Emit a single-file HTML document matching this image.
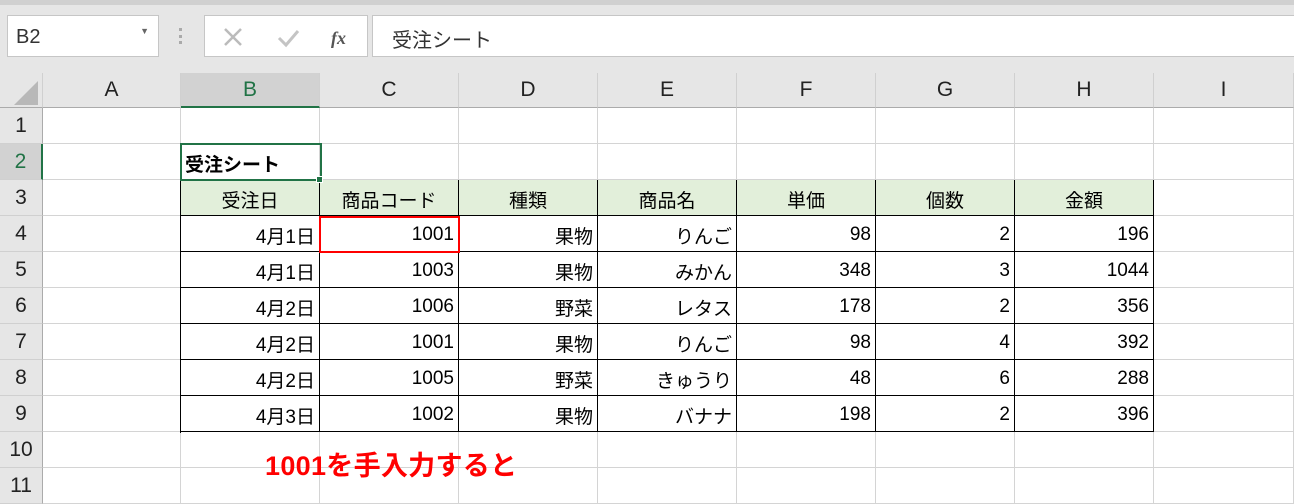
<!DOCTYPE html>
<html><head><meta charset="utf-8"><style>
*{margin:0;padding:0;box-sizing:border-box}
body{width:1294px;height:504px;overflow:hidden;background:#e6e6e6;font-family:"Liberation Sans","Noto Sans CJK JP",sans-serif;position:relative}
.top{position:absolute;left:0;top:0;width:1294px;height:5px;background:#d0d0d0}
.box{position:absolute;background:#fff;border:1px solid #c6c6c6}
.grid{position:absolute;left:0;top:73px;display:grid;grid-template-columns:43px 138px repeat(7,139px) 140px;grid-template-rows:35px repeat(11,36px);background:#fff}
.grid div{border-right:1px solid #d4d4d4;border-bottom:1px solid #d4d4d4;font-size:19px;color:#000;display:flex;align-items:center;justify-content:flex-end;padding-right:4px;padding-top:3px;white-space:nowrap}
.grid .ch{background:#e6e6e6;justify-content:center;padding:0;color:#222;font-size:21px;border-bottom:1px solid #ababab;border-right:1px solid #d0d0d0}
.grid .rh{background:#e6e6e6;justify-content:center;padding:0;color:#222;font-size:21px;border-right:1px solid #ababab;border-bottom:1px solid #d0d0d0}
.grid .t{border-right:1px solid #000;border-bottom:1px solid #000}
.grid .h{background:#e2efda;justify-content:center;padding-right:0}
</style></head><body>
<div class="top"></div>
<div class="box" style="left:7px;top:15px;width:152px;height:42px;font-size:20px;color:#333;padding:10px 0 0 8px">B2<span style="position:absolute;right:9px;top:10px;font-size:9px;color:#666">▼</span></div>
<div style="position:absolute;left:179px;top:28px;width:3px;height:16px;border-left:3px dotted #aaa"></div>
<div class="box" style="left:204px;top:15px;width:164px;height:42px">
<svg width="164" height="42" style="position:absolute;left:0;top:0"><path d="M20 13 L36 29 M36 13 L20 29" stroke="#bbb" stroke-width="2.5" fill="none"/><path d="M74 22 L81 29 L93 15" stroke="#c4c4c4" stroke-width="3" fill="none"/><text x="126" y="28" font-family="Liberation Serif" font-style="italic" font-weight="bold" font-size="18" fill="#555">fx</text></svg></div>
<div class="box" style="left:372px;top:15px;width:930px;height:42px;font-size:20px;color:#333;padding:8px 0 0 19px">受注シート</div>
<div class="grid">
<div class="ch"><svg width="30" height="30" style="margin:4px 0 0 8px"><path d="M28 4 L28 28 L4 28 Z" fill="#b8b8b8"/></svg></div><div class="ch">A</div><div class="ch" style="background:#d2d2d2;color:#217346;border-bottom:2px solid #217346">B</div><div class="ch">C</div><div class="ch">D</div><div class="ch">E</div><div class="ch">F</div><div class="ch">G</div><div class="ch">H</div><div class="ch">I</div>
<div class="rh">1</div><div></div><div></div><div></div><div></div><div></div><div></div><div></div><div></div><div></div>
<div class="rh" style="background:#d2d2d2;color:#217346;border-right:2px solid #217346">2</div><div></div><div style="justify-content:flex-start;padding-left:4px;font-weight:bold;border-bottom:1px solid #000">受注シート</div><div></div><div></div><div></div><div></div><div></div><div></div><div></div>
<div class="rh">3</div><div></div><div class="t h">受注日</div><div class="t h">商品コード</div><div class="t h">種類</div><div class="t h">商品名</div><div class="t h">単価</div><div class="t h">個数</div><div class="t h">金額</div><div></div>
<div class="rh">4</div><div></div><div class="t">4月1日</div><div class="t">1001</div><div class="t">果物</div><div class="t">りんご</div><div class="t">98</div><div class="t">2</div><div class="t">196</div><div></div>
<div class="rh">5</div><div></div><div class="t">4月1日</div><div class="t">1003</div><div class="t">果物</div><div class="t">みかん</div><div class="t">348</div><div class="t">3</div><div class="t">1044</div><div></div>
<div class="rh">6</div><div></div><div class="t">4月2日</div><div class="t">1006</div><div class="t">野菜</div><div class="t">レタス</div><div class="t">178</div><div class="t">2</div><div class="t">356</div><div></div>
<div class="rh">7</div><div></div><div class="t">4月2日</div><div class="t">1001</div><div class="t">果物</div><div class="t">りんご</div><div class="t">98</div><div class="t">4</div><div class="t">392</div><div></div>
<div class="rh">8</div><div></div><div class="t">4月2日</div><div class="t">1005</div><div class="t">野菜</div><div class="t">きゅうり</div><div class="t">48</div><div class="t">6</div><div class="t">288</div><div></div>
<div class="rh">9</div><div></div><div class="t">4月3日</div><div class="t">1002</div><div class="t">果物</div><div class="t">バナナ</div><div class="t">198</div><div class="t">2</div><div class="t">396</div><div></div>
<div class="rh">10</div><div></div><div></div><div></div><div></div><div></div><div></div><div></div><div></div><div></div>
<div class="rh">11</div><div></div><div></div><div></div><div></div><div></div><div></div><div></div><div></div><div></div>
</div>
<div style="position:absolute;left:180px;top:180px;width:1px;height:253px;background:#000"></div>
<div style="position:absolute;left:180px;top:143px;width:142px;height:38px;border:2px solid #217346"></div>
<div style="position:absolute;left:316px;top:176px;width:7px;height:7px;background:#217346;border:1px solid #fff"></div>
<div style="position:absolute;left:319px;top:216px;width:141px;height:37px;border:2px solid #f00"></div>
<div style="position:absolute;left:265px;top:450px;font-size:27px;font-weight:bold;color:#f00;white-space:nowrap;line-height:32px;letter-spacing:0.3px">1001を手入力すると</div>
</body></html>
